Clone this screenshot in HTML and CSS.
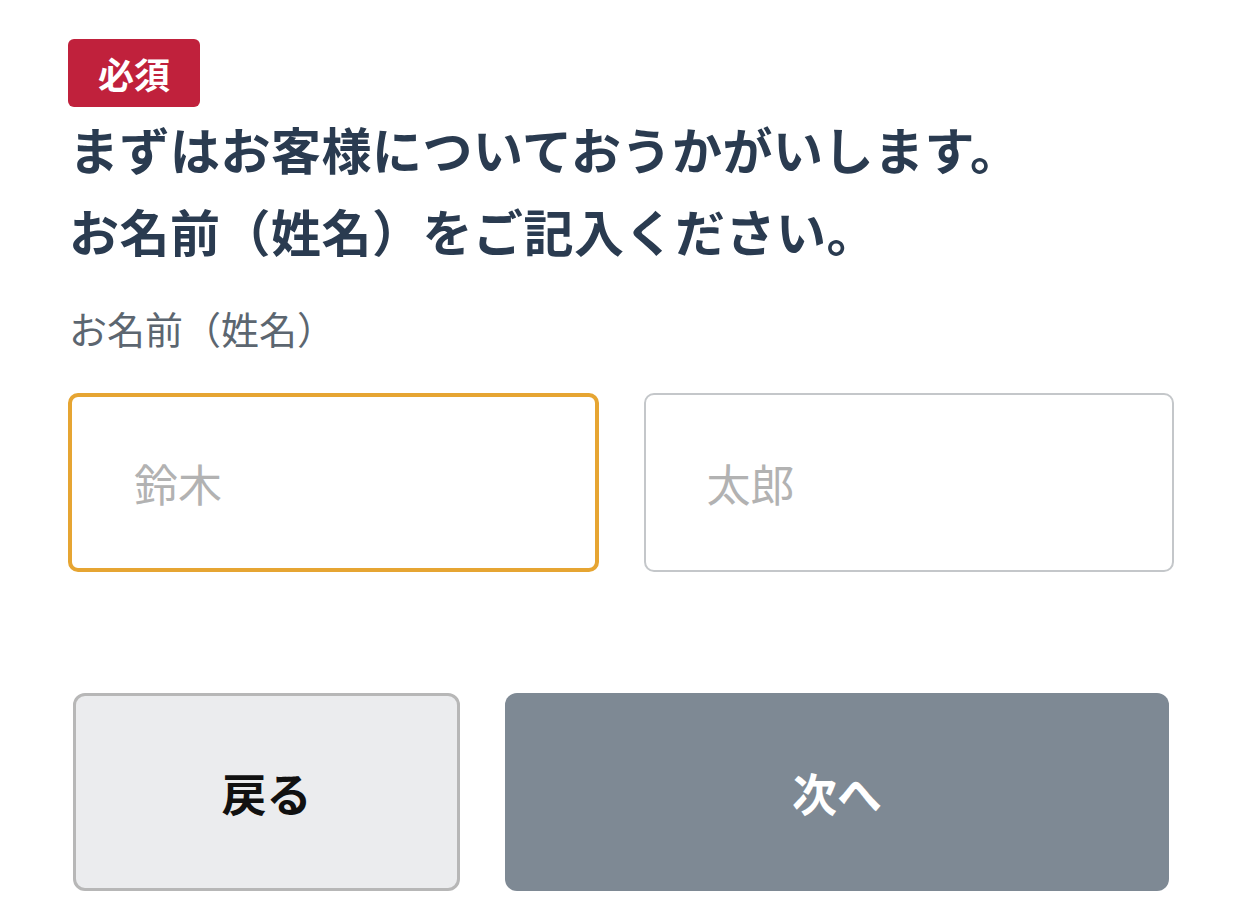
FILE: index.html
```html
<!DOCTYPE html>
<html lang="ja">
<head>
<meta charset="utf-8">
<title>お名前</title>
<link rel="stylesheet" href="styles.css">
</head>
<body>
<main class="form">
  <span class="badge">必須</span>
  <h1 class="question">まずはお客様についておうかがいします。<br>お名前（姓名）をご記入ください。</h1>
  <label class="label" for="sei">お名前（姓名）</label>
  <div class="inputs">
    <input id="sei" class="field field-focus" type="text" placeholder="鈴木">
    <input id="mei" class="field" type="text" placeholder="太郎">
  </div>
  <div class="actions">
    <button class="btn btn-back" type="button">戻る</button>
    <button class="btn btn-next" type="button">次へ</button>
  </div>
</main>
</body>
</html>
```

FILE: styles.css
```css
html, body {
  margin: 0;
  padding: 0;
  background: #ffffff;
}

body {
  font-family: "Noto Sans CJK JP", "Noto Sans", sans-serif;
}

.form {
  width: 1106px;
  padding: 39px 0 0 68px;
  display: flex;
  flex-direction: column;
  align-items: flex-start;
}

.badge {
  display: inline-flex;
  align-items: center;
  justify-content: center;
  height: 68px;
  padding: 0 30px;
  box-sizing: border-box;
  background: #c0213c;
  color: #ffffff;
  font-size: 36px;
  font-weight: 700;
  border-radius: 6px;
  line-height: 1;
}

.question {
  margin: 0 0 0 1px;
  font-size: 50px;
  line-height: 82px;
  font-weight: 700;
  color: #2a3b50;
  letter-spacing: 0.5px;
}

.label {
  margin: 32px 0 0 1px;
  font-size: 38px;
  line-height: 50px;
  color: #5c6670;
}

.inputs {
  margin-top: 40px;
  width: 100%;
  display: grid;
  grid-template-columns: 1fr 1fr;
  gap: 45px;
}

.field {
  box-sizing: border-box;
  height: 179px;
  width: 100%;
  border: 2px solid #c4c7ca;
  border-radius: 10px;
  padding: 0 0 0 61px;
  font-family: "Noto Sans CJK JP", "Noto Sans", sans-serif;
  font-size: 44px;
  color: #333333;
  background: #ffffff;
  outline: none;
}

.field::placeholder {
  color: #b2b2b2;
}

.field-focus {
  border: 4px solid #e6a532;
  padding-left: 62px;
}

.actions {
  margin: 121px 5px 0 5px;
  width: 1096px;
  display: grid;
  grid-template-columns: 387px 1fr;
  gap: 45px;
}

.btn {
  height: 198px;
  box-sizing: border-box;
  border-radius: 12px;
  font-family: "Noto Sans CJK JP", "Noto Sans", sans-serif;
  font-size: 45px;
  font-weight: 700;
  cursor: pointer;
}

.btn-back {
  background: #ebecee;
  border: 3px solid #b7b7b7;
  color: #111111;
}

.btn-next {
  background: #7e8994;
  border: none;
  color: #ffffff;
}
```
